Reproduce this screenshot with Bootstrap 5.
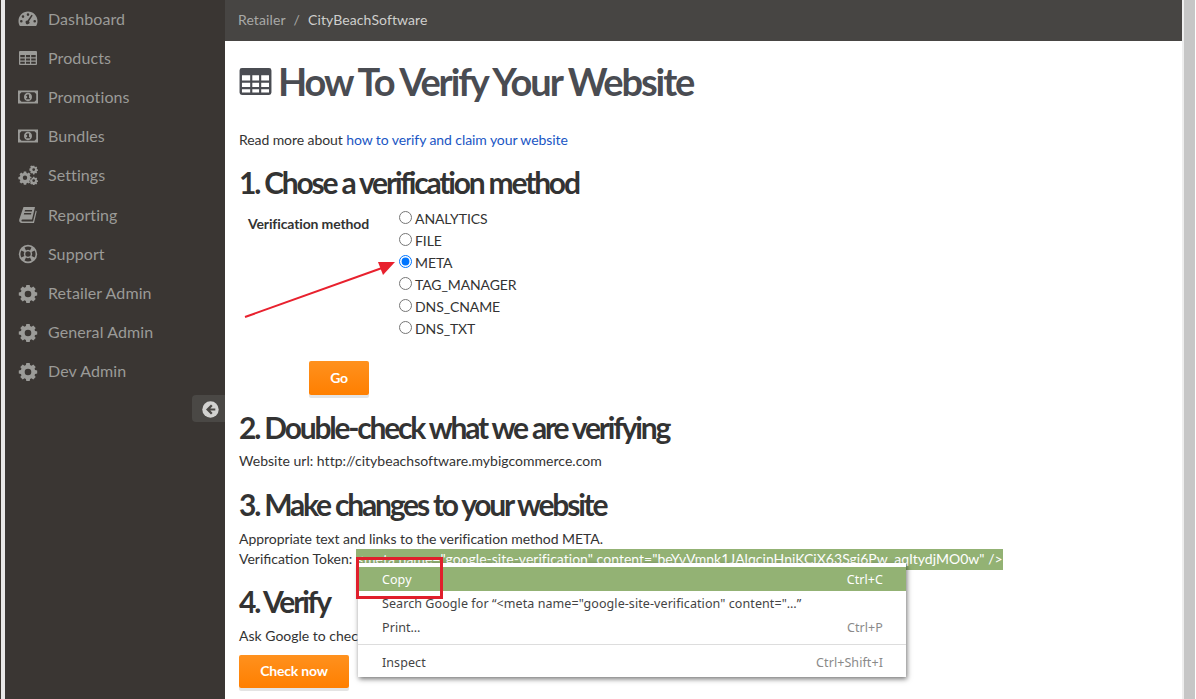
<!doctype html>
<html lang="en">
<head>
<meta charset="utf-8">
<title>How To Verify Your Website</title>
<link href="https://cdn.jsdelivr.net/npm/bootstrap@5.3.0/dist/css/bootstrap.min.css" rel="stylesheet">
<style>
html,body{height:699px;overflow:hidden}
body{font-family:Lato,"Liberation Sans",sans-serif;font-size:14px;line-height:20px;color:#333;background:#fff}
.shell{height:699px;width:1196px}
.edge-left{width:5px;background:#e8e8e8;border-left:1px solid #3a3530}
.side{width:220px;background:#3a3633;position:relative}
.side-list{margin-top:-1px}
.side-item{height:39.2px;display:flex;align-items:center;color:#9b9b98;font-size:16px;letter-spacing:.1px;padding-left:13px;gap:10px}
.side-item svg{width:20px;height:20px;flex:none;fill:#9b9b98}
.collapse-tab{position:absolute;right:0;top:395px;width:33px;height:27px;background:#4a4845;border-radius:4px 0 0 4px;display:flex;align-items:center;justify-content:center;padding-left:3px;padding-top:1px}
.main-col{width:957px;position:relative}
.crumbs{height:41px;background:#474543;color:#cfcfcd;padding:0 0 2px 13px;font-size:14px;letter-spacing:.1px;gap:8px}
.crumbs .past{color:#a9a9a7}
.bodywrap{padding:0 14px}
h1.ttl{font-size:38px;line-height:40px;font-weight:700;color:#4a4c52;letter-spacing:-2.1px;margin:20px 0 0;display:flex;align-items:center;gap:6px}
.ttl svg{width:33px;height:29px;fill:#4a4c52;flex:none}
.intro{margin:29px 0 0;letter-spacing:-.08px}
.intro a{color:#1a56c4;text-decoration:none}
h2.sec{font-size:30px;line-height:34px;font-weight:700;color:#333;letter-spacing:-2.2px;margin:15px 0 0}
h2.sec-third{margin-top:16px}
h2.sec-last{margin-top:14px}
.form-rowx{display:flex;margin-top:9px}
.lbl{width:160px;padding-left:9px;font-weight:700;padding-top:6px;letter-spacing:-.13px;color:#333}
.radios{display:flex;flex-direction:column;letter-spacing:-.1px}
.radios label{height:22px;display:flex;align-items:center;gap:3px}
.radios input{width:13px;height:13px;margin:0 0 3px;flex:none}
.btn-org{background:linear-gradient(#ff911e,#ff7f00);color:#fff;font-weight:700;border:0;border-radius:2px;box-shadow:0 3px 0 #e4e4e4;font-size:14px;height:34px;letter-spacing:-.2px;padding:0 0 2px}
.go{width:60px;margin:21px 0 0 70px;display:block}
.chk{width:110px;height:33px;display:block;margin-top:9px}
.url-line{margin:7px 0 0;letter-spacing:.02px}
.token-par{margin:8px 0 0}
.token-par .appro{letter-spacing:-.05px}
.verify-par{margin:8px 0 0}
.tok{background:#93b274;color:#fff;display:inline-block;height:21px;letter-spacing:.02px}
.mark-frame{position:absolute;left:356px;top:557px;width:87px;height:42px;border:3px solid #e01f2c;z-index:4}
.arrowx{position:absolute;left:240px;top:255px;z-index:3}
.ctx{position:absolute;left:358px;top:563px;width:548px;height:114px;background:#fff;box-shadow:1px 2px 5px rgba(0,0,0,.55);font-family:"Noto Sans",sans-serif;font-size:12.5px;letter-spacing:.08px;color:#444;z-index:2;padding-top:4px}
.ctx-row{height:24px;display:flex;align-items:center;justify-content:space-between;padding:2px 23px 0 24px}
.ctx-row.on{background:#93b274;color:#fff}
.ctx-row span+span{color:#8a8a8a}
.ctx-row.on span+span{color:#fff}
.ctx hr{margin:5px 0 5px;border:0;border-top:1px solid #ddd;opacity:1}
.scrollx{flex:1;background:#c6c6c6;border-left:2px solid #eee;border-right:1px solid #fff}
</style>
</head>
<body>
<div class="shell d-flex">
  <div class="edge-left"></div>
  <nav class="side">
    <div class="side-list">
    <div class="side-item"><svg viewBox="0 0 20 20"><path fill-rule="evenodd" d="M10 2.500C4.800 2.500.5 6.700.5 12c0 1.900.5 3.600 1.400 5h16.200c.9-1.400 1.400-3.100 1.400-5 0-5.300-4.300-9.500-9.500-9.500zM10 4.300a1.300 1.300 0 1 1 0 2.600 1.300 1.300 0 0 1 0-2.600zM5 6.300a1.300 1.300 0 1 1 0 2.600 1.300 1.300 0 0 1 0-2.600zM3.300 11a1.300 1.300 0 1 1 0 2.600 1.300 1.300 0 0 1 0-2.600zM16.700 11a1.300 1.300 0 1 1 0 2.600 1.300 1.300 0 0 1 0-2.600zM14.700 6.500 11 12.200a1.900 1.900 0 1 1-1.400-.7l3.900-5.700z"/></svg><span>Dashboard</span></div>
    <div class="side-item"><svg viewBox="0 0 20 20"><path fill-rule="evenodd" d="M2 3h16a1 1 0 0 1 1 1v12a1 1 0 0 1-1 1H2a1 1 0 0 1-1-1V4a1 1 0 0 1 1-1zM2.300 7v2.300h4.500V7zm5.700 0v2.300h4V7zm5.200 0v2.300h4.500V7zM2.300 10.400v2.200h4.500v-2.200zm5.700 0v2.200h4v-2.200zm5.200 0v2.200h4.500v-2.200zM2.300 13.700v2h4.500v-2zm5.700 0v2h4v-2zm5.200 0v2h4.500v-2z"/></svg><span>Products</span></div>
    <div class="side-item"><svg viewBox="0 0 20 20"><path fill-rule="evenodd" d="M0 3.500h20v13H0zM3.500 5.300 1.800 7v6l1.700 1.700h13l1.700-1.700V7l-1.700-1.700zM10 5.800c2.300 0 4 1.900 4 4.200s-1.700 4.200-4 4.200S6 12.300 6 10s1.700-4.200 4-4.200zM9.200 7.500 8 8.400l.6.800.5-.4v2.500H8v1h4v-1h-1V7.500z"/></svg><span>Promotions</span></div>
    <div class="side-item"><svg viewBox="0 0 20 20"><path fill-rule="evenodd" d="M0 3.500h20v13H0zM3.500 5.300 1.800 7v6l1.700 1.700h13l1.700-1.700V7l-1.700-1.700zM10 5.800c2.300 0 4 1.900 4 4.200s-1.700 4.200-4 4.200S6 12.300 6 10s1.700-4.200 4-4.200zM9.200 7.500 8 8.400l.6.800.5-.4v2.500H8v1h4v-1h-1V7.500z"/></svg><span>Bundles</span></div>
    <div class="side-item"><svg viewBox="0 0 20 20"><path fill-rule="evenodd" d="M5.800 6.500h2.400l.3 1.500 1 .4 1.300-.8 1.700 1.700-.8 1.300.4 1 1.500.3v2.400l-1.500.3-.4 1 .8 1.300-1.700 1.700-1.300-.8-1 .4-.3 1.500H5.800l-.3-1.500-1-.4-1.300.8-1.700-1.700.8-1.300-.4-1-1.500-.3v-2.400l1.500-.3.4-1-.8-1.300 1.700-1.700 1.300.8 1-.4zM7 10.500a2.200 2.200 0 1 0 0 4.400 2.200 2.200 0 0 0 0-4.400zM15 .8h1.400l.2 1 .7.300.9-.5 1 1-.5.9.3.700 1 .2v1.400l-1 .2-.3.7.5.9-1 1-.9-.5-.7.300-.2 1H15l-.2-1-.7-.3-.9.5-1-1 .5-.9-.3-.7-1-.2V3.400l1-.2.3-.7-.5-.9 1-1 .9.5.7-.3zM15.700 3.200a1 1 0 1 0 0 2.800 1 1 0 0 0 0-2.800zM15 11.800h1.400l.2 1 .7.300.9-.5 1 1-.5.9.3.700 1 .2v1.400l-1 .2-.3.7.5.9-1 1-.9-.5-.7.300-.2 1H15l-.2-1-.7-.3-.9.5-1-1 .5-.9-.3-.7-1-.2v-1.400l1-.2.3-.7-.5-.9 1-1 .9.5.7-.3zM15.700 14.200a1 1 0 1 0 0 2.800 1 1 0 0 0 0-2.800z"/></svg><span>Settings</span></div>
    <div class="side-item"><svg viewBox="0 0 20 20"><path fill-rule="evenodd" d="M5.500 2H17l-3 12.500H4.500c-1.300 0-1.500 2-.2 2H15l2.700-11 1 .7L16 18H3.500C1.500 18 .8 16 1.300 14.300zM7 5l-.4 1.400h7.200L14.200 5zM6.200 8l-.4 1.400H13L13.400 8z"/></svg><span>Reporting</span></div>
    <div class="side-item"><svg viewBox="0 0 20 20"><path fill-rule="evenodd" d="M10 .8a9.200 9.200 0 1 1 0 18.400A9.200 9.200 0 0 1 10 .8zM6.500 3.400 8 6.400a4 4 0 0 1 4 0l1.500-3a7.400 7.400 0 0 0-7 0zM3.400 6.500a7.400 7.400 0 0 0 0 7l3-1.500a4 4 0 0 1 0-4zM16.600 6.500l-3 1.500a4 4 0 0 1 0 4l3 1.500a7.400 7.400 0 0 0 0-7zM8 13.600l-1.500 3a7.400 7.400 0 0 0 7 0l-1.500-3a4 4 0 0 1-4 0zM10 7.300a2.700 2.700 0 1 0 0 5.400 2.700 2.700 0 0 0 0-5.400z"/></svg><span>Support</span></div>
    <div class="side-item"><svg viewBox="0 0 20 20"><path fill-rule="evenodd" d="M8.300 2h3.400l.4 2.100 1.400.6 1.800-1.200 2.400 2.400-1.200 1.800.6 1.400 2.100.4v3l-2.100.4-.6 1.400 1.200 1.800-2.400 2.400-1.800-1.200-1.400.6-.4 2.100H8.300l-.4-2.100-1.400-.6-1.800 1.200-2.400-2.400 1.200-1.800-.6-1.400-2.100-.4v-3l2.100-.4.6-1.400-1.200-1.800 2.400-2.400 1.800 1.200 1.400-.6zM10 7.700a3.300 3.300 0 1 0 0 6.600 3.300 3.300 0 0 0 0-6.600z"/></svg><span>Retailer Admin</span></div>
    <div class="side-item"><svg viewBox="0 0 20 20"><path fill-rule="evenodd" d="M8.300 2h3.400l.4 2.100 1.400.6 1.800-1.200 2.400 2.400-1.200 1.800.6 1.400 2.100.4v3l-2.100.4-.6 1.400 1.200 1.800-2.400 2.400-1.800-1.200-1.400.6-.4 2.100H8.300l-.4-2.100-1.400-.6-1.800 1.200-2.400-2.400 1.200-1.800-.6-1.400-2.100-.4v-3l2.100-.4.6-1.400-1.200-1.800 2.400-2.400 1.800 1.200 1.400-.6zM10 7.700a3.300 3.300 0 1 0 0 6.600 3.300 3.300 0 0 0 0-6.600z"/></svg><span>General Admin</span></div>
    <div class="side-item"><svg viewBox="0 0 20 20"><path fill-rule="evenodd" d="M8.300 2h3.400l.4 2.100 1.400.6 1.800-1.200 2.400 2.400-1.200 1.800.6 1.400 2.100.4v3l-2.100.4-.6 1.400 1.200 1.800-2.400 2.400-1.800-1.200-1.400.6-.4 2.100H8.300l-.4-2.100-1.400-.6-1.800 1.200-2.400-2.400 1.200-1.800-.6-1.400-2.100-.4v-3l2.100-.4.6-1.400-1.200-1.800 2.400-2.400 1.800 1.200 1.400-.6zM10 7.700a3.300 3.300 0 1 0 0 6.600 3.300 3.300 0 0 0 0-6.600z"/></svg><span>Dev Admin</span></div>
    </div>
    <div class="collapse-tab"><svg width="17" height="17" viewBox="0 0 17 17"><circle cx="8.500" cy="8.500" r="8.200" fill="#d2d2d0"/><path d="M9 3.500 4 8.500l5 5 1.600-1.600-2.300-2.300h5V7.400h-5l2.300-2.300z" fill="#4a4845"/></svg></div>
  </nav>
  <main class="main-col">
    <div class="crumbs d-flex align-items-center"><span class="past">Retailer</span><span class="past">/</span><span>CityBeachSoftware</span></div>
    <div class="bodywrap">
      <h1 class="ttl"><svg viewBox="0 0 34 30"><path fill-rule="evenodd" d="M3 1h28a2.500 2.500 0 0 1 2.500 2.500v23A2.500 2.500 0 0 1 31 29H3a2.500 2.500 0 0 1-2.500-2.500v-23A2.500 2.500 0 0 1 3 1zM3 8.500v5.500h8.500V8.500zm10.700 0v5.500h7V8.500zm9.200 0v5.500h8.100V8.500zM3 16.200v4.500h8.500v-4.500zm10.700 0v4.500h7v-4.500zm9.200 0v4.500h8.100v-4.500zM3 23v3.500h8.500V23zm10.700 0v3.500h7V23zm9.200 0v3.500h8.100V23z"/></svg><span>How To Verify Your Website</span></h1>
      <p class="intro">Read more about <a href="#">how to verify and claim your website</a></p>
      <h2 class="sec">1. Chose a verification method</h2>
      <div class="form-rowx">
        <div class="lbl">Verification method</div>
        <div class="radios">
          <label><input type="radio" name="m">ANALYTICS</label>
          <label><input type="radio" name="m">FILE</label>
          <label><input type="radio" name="m" checked>META</label>
          <label><input type="radio" name="m">TAG_MANAGER</label>
          <label><input type="radio" name="m">DNS_CNAME</label>
          <label><input type="radio" name="m">DNS_TXT</label>
        </div>
      </div>
      <button class="btn btn-org go">Go</button>
      <h2 class="sec">2. Double-check what we are verifying</h2>
      <p class="url-line">Website url: http://citybeachsoftware.mybigcommerce.com</p>
      <h2 class="sec sec-third">3. Make changes to your website</h2>
      <p class="token-par"><span class="appro">Appropriate text and links to the verification method META.</span><br>Verification Token: <span class="tok">&lt;meta name="google-site-verification" content="beYvVmnk1JAlqcinHnjKCjX63Sgi6Pw_aqItydjMO0w" /&gt;</span></p>
      <h2 class="sec sec-last">4. Verify</h2>
      <p class="verify-par">Ask Google to check</p>
      <button class="btn btn-org chk">Check now</button>
    </div>
  </main>
  <div class="scrollx"></div>
</div>
<div class="ctx">
  <div class="ctx-row on"><span>Copy</span><span>Ctrl+C</span></div>
  <div class="ctx-row"><span>Search Google for “&lt;meta name="google-site-verification" content="…”</span></div>
  <div class="ctx-row"><span>Print…</span><span>Ctrl+P</span></div>
  <hr>
  <div class="ctx-row"><span>Inspect</span><span>Ctrl+Shift+I</span></div>
</div>
<div class="mark-frame"></div>
<svg class="arrowx" width="160" height="70" viewBox="0 0 160 70"><path d="M5 62 142 13" stroke="#e8212e" stroke-width="2" fill="none"/><path d="M155 7 138 7 143 20z" fill="#e8212e"/></svg>
<script src="https://cdn.jsdelivr.net/npm/bootstrap@5.3.0/dist/js/bootstrap.bundle.min.js"></script>
</body>
</html>
